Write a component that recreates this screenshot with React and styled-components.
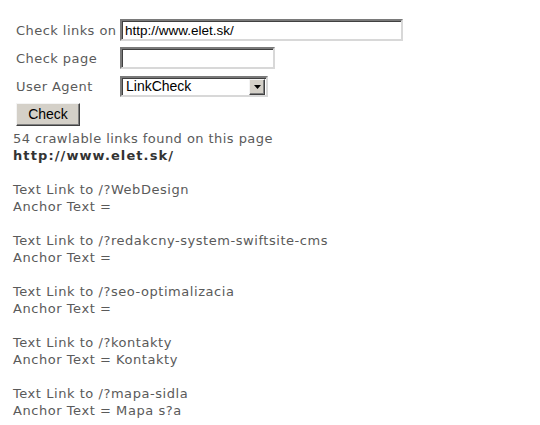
import React from 'react';
import styled, { createGlobalStyle } from 'styled-components';

const GlobalStyle = createGlobalStyle`
	body {
		margin: 0;
		background: #fff;
	}
`;

const Page = styled.div`
	padding: 16px 0 0 13px;
	font-family: 'DejaVu Sans', Verdana, sans-serif;
	font-size: 13px;
	letter-spacing: 0.55px;
	color: #5a5a5a;
`;

const Form = styled.form`
	display: grid;
	grid-template-columns: 104px auto;
	grid-auto-rows: 28px;
	padding-left: 3px;
	align-items: center;
	justify-items: start;
`;

const Label = styled.label`
	white-space: nowrap;
	line-height: 17px;
	letter-spacing: 0.45px;
`;

const Field = styled.input`
	box-sizing: border-box;
	width: ${(p) => p.$width}px;
	height: 22px;
	margin: 0;
	padding: 0 3px;
	border: 2px solid;
	border-color: #7a7a7a #d8d8d8 #d8d8d8 #7a7a7a;
	box-shadow: inset 1px 1px 0 #404040;
	background: #fff;
	font-family: 'Liberation Sans', Arial, sans-serif;
	font-size: 13.5px;
	letter-spacing: 0;
	color: #000;
	outline: none;
`;

const SelectBox = styled.div`
	box-sizing: border-box;
	display: flex;
	align-items: stretch;
	width: ${(p) => p.$width}px;
	height: 21px;
	border: 2px solid;
	border-color: #7a7a7a #d8d8d8 #d8d8d8 #7a7a7a;
	box-shadow: inset 1px 1px 0 #404040;
	background: #fff;
`;

const Select = styled.select`
	flex: 1;
	appearance: none;
	border: 0;
	margin: 0;
	padding: 0 4px;
	background: transparent;
	font-family: 'Liberation Sans', Arial, sans-serif;
	font-size: 14px;
	letter-spacing: 0;
	color: #000;
	outline: none;
`;

const ArrowButton = styled.span`
	box-sizing: border-box;
	width: 16px;
	margin: 1px 1px 0 0;
	display: flex;
	align-items: center;
	justify-content: center;
	background: #d4d0c8;
	border: 1px solid;
	border-color: #f4f4f4 #404040 #404040 #f4f4f4;
	box-shadow: inset -1px -1px 0 #808080;
`;

const Button = styled.button`
	grid-column: 1 / 3;
	box-sizing: border-box;
	width: 64px;
	height: 23px;
	margin: 0;
	padding: 0;
	background: #d4d0c8;
	border: 1px solid;
	border-color: #f4f4f4 #404040 #404040 #f4f4f4;
	box-shadow: inset -1px -1px 0 #808080;
	font-family: 'Liberation Sans', Arial, sans-serif;
	font-size: 14px;
	letter-spacing: 0;
	color: #000;
`;

const Results = styled.div`
	padding-top: 2px;
	line-height: 17px;
`;

const Summary = styled.div`
	letter-spacing: 0.45px;
`;

const Url = styled.div`
	font-weight: bold;
	letter-spacing: 1.1px;
	color: #333;
	margin-bottom: 17px;
`;

const Entry = styled.div`
	margin-bottom: 17px;
`;

const links = [
	{ to: '/?WebDesign', anchor: '' },
	{ to: '/?redakcny-system-swiftsite-cms', anchor: '' },
	{ to: '/?seo-optimalizacia', anchor: '' },
	{ to: '/?kontakty', anchor: 'Kontakty' },
	{ to: '/?mapa-sidla', anchor: 'Mapa s?a' },
];

function App() {
	return (
		<Page>
			<GlobalStyle />
			<Form onSubmit={(e) => e.preventDefault()}>
				<Label htmlFor="url">Check links on</Label>
				<Field id="url" $width={283} defaultValue="http://www.elet.sk/" />
				<Label htmlFor="page">Check page</Label>
				<Field id="page" $width={155} defaultValue="" />
				<Label htmlFor="agent">User Agent</Label>
				<SelectBox $width={148}>
					<Select id="agent" defaultValue="LinkCheck">
						<option>LinkCheck</option>
					</Select>
					<ArrowButton>
						<svg width="7" height="4" viewBox="0 0 7 4">
							<path d="M0 0h7L3.5 4z" fill="#000" />
						</svg>
					</ArrowButton>
				</SelectBox>
				<Button type="submit">Check</Button>
			</Form>
			<Results>
				<Summary>54 crawlable links found on this page</Summary>
				<Url>http://www.elet.sk/</Url>
				{links.map((link, i) => (
					<Entry key={i}>
						<div>Text Link to {link.to}</div>
						<div>Anchor Text = {link.anchor}</div>
					</Entry>
				))}
			</Results>
		</Page>
	);
}

export default App;
